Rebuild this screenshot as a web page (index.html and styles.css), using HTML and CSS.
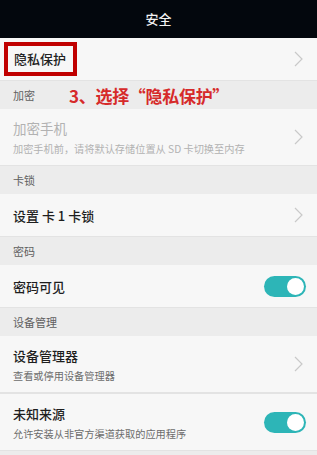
FILE: index.html
```html
<!DOCTYPE html>
<html lang="zh-CN">
<head>
    <meta charset="UTF-8">
    <meta name="viewport" content="width=device-width, initial-scale=1.0">
    <title>安全</title>
    <link rel="stylesheet" href="styles.css">
</head>
<body>
    <div class="screen">
        <div class="title-bar">安全</div>

        <div class="row row-first">
            <span class="mark-box">隐私保护</span>
            <svg class="chevron" width="9" height="16" viewBox="0 0 9 16"><polyline points="1,1 8,8 1,15" fill="none" stroke="#c9c9c9" stroke-width="1.2"/></svg>
        </div>

        <div class="section">
            加密
            <span class="note">3、选择“隐私保护”</span>
        </div>
        <div class="row row-double disabled">
            <div class="texts">
                <div class="item-title">加密手机</div>
                <div class="item-sub">加密手机前，请将默认存储位置从 SD 卡切换至内存</div>
            </div>
            <svg class="chevron" width="9" height="16" viewBox="0 0 9 16"><polyline points="1,1 8,8 1,15" fill="none" stroke="#c9c9c9" stroke-width="1.2"/></svg>
        </div>

        <div class="section">卡锁</div>
        <div class="row">
            <div class="item-title">设置 卡 1 卡锁</div>
            <svg class="chevron" width="9" height="16" viewBox="0 0 9 16"><polyline points="1,1 8,8 1,15" fill="none" stroke="#c9c9c9" stroke-width="1.2"/></svg>
        </div>

        <div class="section">密码</div>
        <div class="row">
            <div class="item-title">密码可见</div>
            <span class="switch"></span>
        </div>

        <div class="section">设备管理</div>
        <div class="row row-double">
            <div class="texts">
                <div class="item-title">设备管理器</div>
                <div class="item-sub">查看或停用设备管理器</div>
            </div>
            <svg class="chevron" width="9" height="16" viewBox="0 0 9 16"><polyline points="1,1 8,8 1,15" fill="none" stroke="#c9c9c9" stroke-width="1.2"/></svg>
        </div>
        <div class="divider"></div>
        <div class="row row-double">
            <div class="texts">
                <div class="item-title">未知来源</div>
                <div class="item-sub">允许安装从非官方渠道获取的应用程序</div>
            </div>
            <span class="switch"></span>
        </div>
    </div>
</body>
</html>
```

FILE: styles.css
```css
body {
    margin: 0;
    font-family: "Noto Sans CJK SC", "Noto Sans", sans-serif;
    background-color: #ececec;
}
.screen {
    width: 317px;
    height: 455px;
    overflow: hidden;
    background-color: #ececec;
}
.title-bar {
    height: 38px;
    line-height: 38px;
    background-color: #03070d;
    color: #f2f2f2;
    text-align: center;
    font-size: 13px;
    font-weight: 500;
}
.row {
    display: flex;
    align-items: center;
    justify-content: space-between;
    height: 42px;
    padding: 0 11px 0 13px;
    background-color: #f7f7f7;
    border-bottom: 1px solid #e3e3e3;
}
.row-first {
    height: 42px;
    padding-left: 4px;
}
.row-double {
    height: 56px;
}
.mark-box {
    display: inline-block;
    height: 26px;
    line-height: 26px;
    padding: 0 7px 0 6px;
    border: 4px solid #c00000;
    font-size: 13px;
    font-weight: 500;
    color: #222;
}
.section {
    position: relative;
    height: 28px;
    line-height: 29px;
    padding-left: 13px;
    font-size: 11px;
    color: #5f5f5f;
    background-color: #ececec;
}
.note {
    position: absolute;
    left: 69px;
    top: 0;
    font-size: 17px;
    font-weight: bold;
    color: #d62a2a;
    letter-spacing: -0.3px;
}
.item-title {
    font-size: 13px;
    font-weight: 500;
    color: #1e1e1e;
}
.item-sub {
    margin-top: 3px;
    font-size: 10.2px;
    color: #6c6c6c;
}
.disabled .item-title,
.disabled .item-sub {
    color: #b2b2b2;
}
.disabled .item-title {
    font-size: 13.5px;
    font-weight: normal;
}
.chevron {
    margin-right: 3px;
}
.switch {
    position: relative;
    width: 42px;
    height: 21px;
    border-radius: 11px;
    background-color: #2db5b7;
}
.switch::after {
    content: "";
    position: absolute;
    right: 2px;
    top: 2px;
    width: 17px;
    height: 17px;
    border-radius: 50%;
    background-color: #fff;
}
.divider {
    height: 1px;
    background-color: #e3e3e3;
}
```
